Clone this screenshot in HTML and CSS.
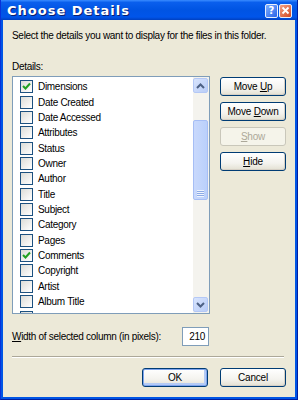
FILE: index.html
```html
<!DOCTYPE html>
<html lang="en">
<head>
    <meta charset="UTF-8">
    <meta name="viewport" content="width=device-width, initial-scale=1.0">
    <title>Choose Details</title>
    <link rel="stylesheet" href="styles.css">
</head>
<body>
    <div class="window">
        <div class="titlebar">
            <span class="title">Choose Details</span>
            <div class="caption-btns">
                <span class="cap-btn help">?</span>
                <span class="cap-btn close">
                    <svg width="9" height="9" viewBox="0 0 9 9"><path d="M1.5 1.5 L7.5 7.5 M7.5 1.5 L1.5 7.5" stroke="#fff" stroke-width="1.8"/></svg>
                </span>
            </div>
        </div>
        <div class="client">
            <p class="intro">Select the details you want to display for the files in this folder.</p>
            <p class="label">Details:</p>

            <div class="main-row">
                <div class="listbox">
                    <ul class="items">
                        <li><span class="check"><svg width="9" height="9" viewBox="0 0 9 9"><path d="M1 4 L3.5 6.5 L8 1.5" stroke="#21a121" stroke-width="2" fill="none"/></svg></span>Dimensions</li>
                        <li><span class="check"></span>Date Created</li>
                        <li><span class="check"></span>Date Accessed</li>
                        <li><span class="check"></span>Attributes</li>
                        <li><span class="check"></span>Status</li>
                        <li><span class="check"></span>Owner</li>
                        <li><span class="check"></span>Author</li>
                        <li><span class="check"></span>Title</li>
                        <li><span class="check"></span>Subject</li>
                        <li><span class="check"></span>Category</li>
                        <li><span class="check"></span>Pages</li>
                        <li><span class="check"><svg width="9" height="9" viewBox="0 0 9 9"><path d="M1 4 L3.5 6.5 L8 1.5" stroke="#21a121" stroke-width="2" fill="none"/></svg></span>Comments</li>
                        <li><span class="check"></span>Copyright</li>
                        <li><span class="check"></span>Artist</li>
                        <li><span class="check"></span>Album Title</li>
                        <li><span class="check"></span></li>
                    </ul>
                    <div class="scrollbar">
                        <span class="sb-btn"><svg width="9" height="6" viewBox="0 0 9 6"><path d="M1 5 L4.5 1.5 L8 5" stroke="#4d6185" stroke-width="2" fill="none"/></svg></span>
                        <div class="track">
                            <div class="thumb">
                                <span class="grip"></span>
                            </div>
                        </div>
                        <span class="sb-btn"><svg width="9" height="6" viewBox="0 0 9 6"><path d="M1 1 L4.5 4.5 L8 1" stroke="#4d6185" stroke-width="2" fill="none"/></svg></span>
                    </div>
                </div>

                <div class="side-btns">
                    <button class="btn">Move <u>U</u>p</button>
                    <button class="btn">Move <u>D</u>own</button>
                    <button class="btn disabled"><u>S</u>how</button>
                    <button class="btn"><u>H</u>ide</button>
                </div>
            </div>

            <div class="width-row">
                <span><u>W</u>idth of selected column (in pixels):</span>
                <span class="num-input">210</span>
            </div>

            <div class="separator"></div>

            <div class="footer">
                <button class="btn default">OK</button>
                <button class="btn">Cancel</button>
            </div>
        </div>
    </div>
</body>
</html>
```

FILE: styles.css
```css
* {
    margin: 0;
    padding: 0;
    box-sizing: border-box;
}

body {
    font-family: 'Liberation Sans', Arial, sans-serif;
    font-size: 10px;
    letter-spacing: -0.3px;
    color: #000;
    background: #fff;
}

.window {
    width: 298px;
    height: 400px;
    background: #0055e5;
    display: flex;
    flex-direction: column;
    border-left: 1px solid #0831d9;
    border-right: 1px solid #001ea0;
    border-bottom: 1px solid #001ea0;
}

/* Title bar */
.titlebar {
    height: 20px;
    display: flex;
    align-items: center;
    justify-content: space-between;
    padding: 0 5px 0 6px;
    background: linear-gradient(to bottom, #3a8cff 0%, #0a5fed 12%, #0054e3 50%, #0055ea 85%, #0040c0 100%);
}

.title {
    font-family: 'DejaVu Sans', sans-serif;
    font-weight: bold;
    font-size: 13px;
    color: #fff;
    text-shadow: 1px 1px 0 #0a1e6e;
    letter-spacing: 1px;
}

.caption-btns {
    display: flex;
    gap: 1px;
    margin-top: 1px;
}

.cap-btn {
    width: 13px;
    height: 14px;
    border: 1px solid #e8eefc;
    border-radius: 2px;
    display: flex;
    align-items: center;
    justify-content: center;
}

.cap-btn.help {
    background: linear-gradient(135deg, #7fb0ff, #2a63e8);
    color: #fff;
    font-family: 'DejaVu Sans', sans-serif;
    font-weight: bold;
    font-size: 10px;
    letter-spacing: 0;
}

.cap-btn.close {
    background: linear-gradient(135deg, #f3a184, #d24a22);
}

/* Client area */
.client {
    flex: 1;
    margin: 0 2px 2px;
    background: #ece9d8;
    padding: 9px 9px 0;
}

.intro {
    line-height: 13px;
    white-space: nowrap;
    margin-bottom: 18px;
}

.label {
    line-height: 13px;
    margin-bottom: 3px;
}

.main-row {
    display: flex;
    align-items: flex-start;
    gap: 10px;
}

.listbox {
    width: 198px;
    height: 238px;
    border: 1px solid #7f9db9;
    background: #fff;
    display: flex;
    overflow: hidden;
}

.items {
    list-style: none;
    flex: 1;
    padding: 2px 0 0 7px;
}

.items li {
    height: 15.36px;
    display: flex;
    align-items: center;
    gap: 5px;
    white-space: nowrap;
}

.check {
    width: 13px;
    height: 13px;
    border: 1px solid #1c5180;
    background: linear-gradient(135deg, #dcdcd7, #fff);
    display: flex;
    align-items: center;
    justify-content: center;
    flex-shrink: 0;
}

/* Scrollbar */
.scrollbar {
    width: 16px;
    display: flex;
    flex-direction: column;
    background: #f4f3ee;
    padding: 1px 1px 1px 0;
}

.sb-btn {
    height: 15px;
    display: flex;
    align-items: center;
    justify-content: center;
    background: linear-gradient(135deg, #d8e4fd, #b9cdf7);
    border: 1px solid #b4c8f6;
    border-radius: 2px;
}

.track {
    flex: 1;
    padding-top: 27px;
}

.thumb {
    height: 80px;
    background: linear-gradient(to right, #c9d9fc, #bad0fb);
    border: 1px solid #a6bef5;
    border-radius: 2px;
    display: flex;
    align-items: flex-end;
    justify-content: center;
}

.grip {
    width: 7px;
    height: 7px;
    margin-bottom: 2px;
    background: repeating-linear-gradient(to bottom, #eef4fe 0, #eef4fe 1px, #8caae6 1px, #8caae6 2px);
}

/* Buttons */
.btn {
    width: 66px;
    height: 19px;
    font-family: 'Liberation Sans', Arial, sans-serif;
    font-size: 10px;
    letter-spacing: -0.2px;
    color: #000;
    border: 1px solid #003c74;
    border-radius: 3px;
    background: linear-gradient(to bottom, #ffffff 0%, #f4f3ee 60%, #e3e0d2 100%);
    box-shadow: inset -1px -1px 0 #d6d0c5;
}

.btn.disabled {
    color: #aca899;
    border-color: #c9c7ba;
    background: #f5f4ea;
    box-shadow: none;
}

.btn.default {
    box-shadow: inset 0 0 0 1px #7ea4ee, inset -1px -1px 0 2px #b4cbf5;
}

.side-btns {
    display: flex;
    flex-direction: column;
    gap: 6px;
    margin-top: 1px;
}

.width-row {
    display: flex;
    align-items: center;
    justify-content: space-between;
    width: 197px;
    margin-top: 13px;
}

.num-input {
    width: 27px;
    height: 19px;
    border: 1px solid #7f9db9;
    background: #fff;
    text-align: right;
    padding: 2px 3px 0 0;
    line-height: 14px;
}

.separator {
    width: 272px;
    margin-top: 10px;
    border-top: 1px solid #aca899;
    border-bottom: 1px solid #fff;
}

.footer {
    display: flex;
    gap: 12px;
    margin: 10px 0 0 130px;
}
```
